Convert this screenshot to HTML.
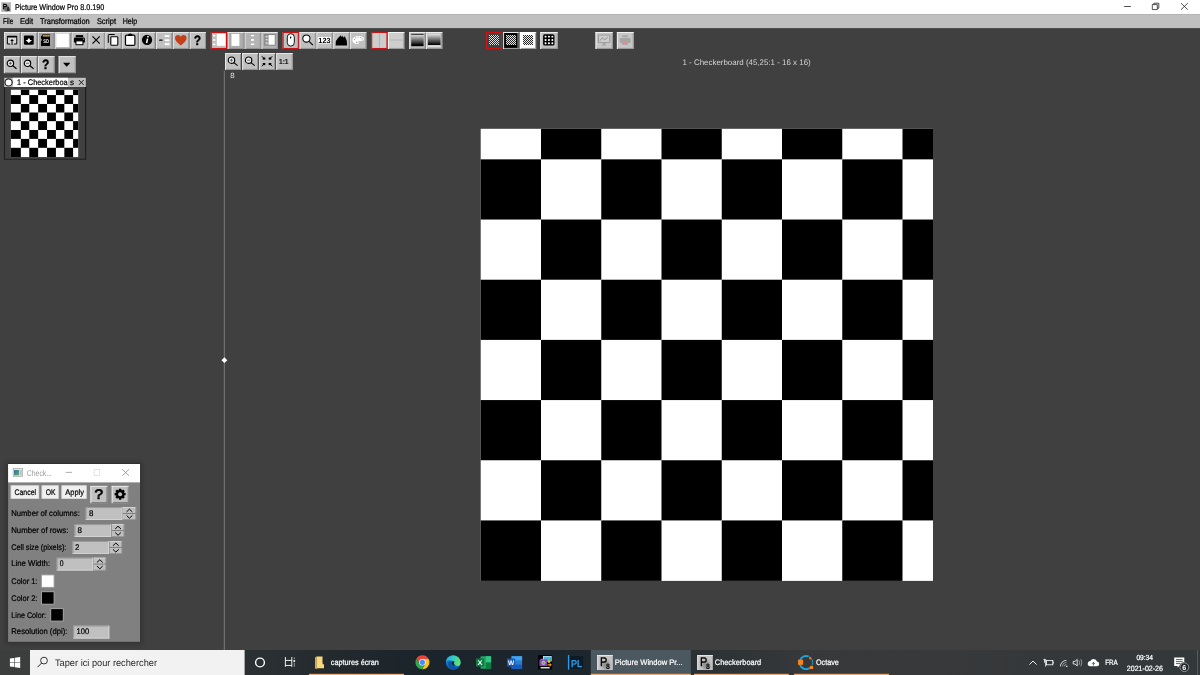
<!DOCTYPE html>
<html>
<head>
<meta charset="utf-8">
<title>Picture Window Pro 8.0.190</title>
<style>
html,body{margin:0;padding:0;}
body{width:1200px;height:675px;overflow:hidden;background:#404040;font-family:"Liberation Sans",sans-serif;position:relative;}
svg.abs{position:absolute;left:0;top:0;display:block;}
svg text{font-family:"Liberation Sans",sans-serif;white-space:pre;}
</style>
</head>
<body>
<svg class="abs" style="will-change:transform" width="1200" height="675" viewBox="0 0 1200 675" text-rendering="geometricPrecision" font-family="'Liberation Sans', sans-serif">
<defs>
<!--DEFS-->
<linearGradient id="gradA" x1="0" y1="0" x2="0" y2="1"><stop offset="0.08" stop-color="#dcdcdc"/><stop offset="0.92" stop-color="#000"/></linearGradient>
<linearGradient id="gradB" x1="0" y1="0" x2="0" y2="1"><stop offset="0" stop-color="#e4e4e4"/><stop offset="0.95" stop-color="#000"/></linearGradient>
<path id="chkP" shape-rendering="crispEdges" d="M0 0h1v1h-1zM0 2h1v1h-1zM0 4h1v1h-1zM0 6h1v1h-1zM0 8h1v1h-1zM1 1h1v1h-1zM1 3h1v1h-1zM1 5h1v1h-1zM1 7h1v1h-1zM1 9h1v1h-1zM2 0h1v1h-1zM2 2h1v1h-1zM2 4h1v1h-1zM2 6h1v1h-1zM2 8h1v1h-1zM3 1h1v1h-1zM3 3h1v1h-1zM3 5h1v1h-1zM3 7h1v1h-1zM3 9h1v1h-1zM4 0h1v1h-1zM4 2h1v1h-1zM4 4h1v1h-1zM4 6h1v1h-1zM4 8h1v1h-1zM5 1h1v1h-1zM5 3h1v1h-1zM5 5h1v1h-1zM5 7h1v1h-1zM5 9h1v1h-1zM6 0h1v1h-1zM6 2h1v1h-1zM6 4h1v1h-1zM6 6h1v1h-1zM6 8h1v1h-1zM7 1h1v1h-1zM7 3h1v1h-1zM7 5h1v1h-1zM7 7h1v1h-1zM7 9h1v1h-1zM8 0h1v1h-1zM8 2h1v1h-1zM8 4h1v1h-1zM8 6h1v1h-1zM8 8h1v1h-1zM9 1h1v1h-1zM9 3h1v1h-1zM9 5h1v1h-1zM9 7h1v1h-1zM9 9h1v1h-1z"/>
<filter id="blur3" x="-20%" y="-20%" width="140%" height="140%"><feGaussianBlur stdDeviation="2.2"/></filter>
<filter id="blur1" x="-30%" y="-30%" width="160%" height="160%"><feGaussianBlur stdDeviation="0.9"/></filter>
<filter id="blur1b" x="-30%" y="-30%" width="160%" height="160%"><feGaussianBlur stdDeviation="0.6"/></filter>
<linearGradient id="icoG" x1="0" y1="0" x2="1" y2="1"><stop offset="0" stop-color="#3a6ea8"/><stop offset="1" stop-color="#58b070"/></linearGradient>
<linearGradient id="tbG" x1="0" y1="0" x2="1200" y2="0" gradientUnits="userSpaceOnUse"><stop offset="0" stop-color="#3b3e3d"/><stop offset="0.025" stop-color="#3b3e3d"/><stop offset="0.0251" stop-color="#2b3033"/><stop offset="0.215" stop-color="#2b3033"/><stop offset="0.275" stop-color="#232a2e"/><stop offset="0.35" stop-color="#1a242a"/><stop offset="0.49" stop-color="#1c262c"/><stop offset="0.576" stop-color="#2a3033"/><stop offset="0.617" stop-color="#2f3437"/><stop offset="0.667" stop-color="#36383a"/><stop offset="0.75" stop-color="#38393b"/><stop offset="0.86" stop-color="#35383a"/><stop offset="1" stop-color="#33383b"/></linearGradient>
<linearGradient id="edgeB" x1="0" y1="0" x2="0" y2="1"><stop offset="0" stop-color="#1c8ee2"/><stop offset="1" stop-color="#0c5bb0"/></linearGradient>
<linearGradient id="edgeG" x1="0" y1="0" x2="1" y2="0.3"><stop offset="0" stop-color="#1aa6e4"/><stop offset="0.45" stop-color="#2cc6d0"/><stop offset="1" stop-color="#66e264"/></linearGradient>
<!--/DEFS-->
</defs>
<!-- ===== TITLE + MENU ===== -->
<g id="titlemenu">
<rect x="0" y="0" width="1200" height="14.1" fill="#ffffff"/>
<rect x="0" y="14.1" width="1200" height="14" fill="#c0c0c0"/>
<!-- app icon -->
<rect x="1.1" y="2" width="9.8" height="9.8" fill="#b2b2b2"/>
<path d="M4.6 6.4 L8 5 L10.4 10.6 L6 11.4 L3.6 9.6 Z" fill="#4a4a4a" opacity="0.7" filter="url(#blur1b)"/>
<rect x="1.1" y="2" width="9.8" height="0.7" fill="#d4d4d4"/>
<rect x="1.1" y="2" width="0.7" height="9.8" fill="#d4d4d4"/>
<text x="2.7" y="8.8" font-size="7.3" fill="#000" stroke="#000" stroke-width="0.45" textLength="4.4" lengthAdjust="spacingAndGlyphs">P</text>
<text x="6.9" y="10.7" font-size="5.4" font-weight="bold" fill="#000" textLength="2.5" lengthAdjust="spacingAndGlyphs">8</text>
<text x="14.9" y="9.8" font-size="8.3" fill="#000" stroke="#000" stroke-width="0.22" textLength="89.5" lengthAdjust="spacingAndGlyphs">Picture Window Pro 8.0.190</text>
<!-- window controls -->
<rect x="1124.2" y="6.2" width="6.6" height="0.8" fill="#222"/>
<path d="M1152.3 4.6 h5 v5 h-5 z M1153.8 4.6 v-1.4 h5 v5 h-1.5" fill="none" stroke="#222" stroke-width="0.8"/>
<path d="M1181 3.1 l6.8 6.6 M1187.8 3.1 l-6.8 6.6" fill="none" stroke="#222" stroke-width="0.8"/>
<!-- menu -->
<g font-size="8.3" fill="#000" stroke="#000" stroke-width="0.24">
<text x="3.1" y="23.7" textLength="10" lengthAdjust="spacingAndGlyphs">File</text>
<text x="20" y="23.7" textLength="13.1" lengthAdjust="spacingAndGlyphs">Edit</text>
<text x="40" y="23.7" textLength="49.75" lengthAdjust="spacingAndGlyphs">Transformation</text>
<text x="96.9" y="23.7" textLength="19.1" lengthAdjust="spacingAndGlyphs">Script</text>
<text x="122.75" y="23.7" textLength="14.5" lengthAdjust="spacingAndGlyphs">Help</text>
</g>
</g>
<!-- ===== TOOLBAR ===== -->
<g id="toolbar">
<!--TOOLBAR-->
<rect x="4.06" y="32.00" width="16.25" height="17.00" fill="#c0c0c0"/><rect x="4.06" y="47.90" width="16.25" height="1.1" fill="#969696"/><rect x="19.31" y="32.00" width="1" height="17.00" fill="#969696"/><rect x="4.06" y="32.00" width="16.25" height="1" fill="#e6e6e6"/><rect x="4.06" y="32.00" width="1" height="17.00" fill="#e6e6e6"/>
<g transform="translate(4.06 32.00)"><rect x="3.3" y="5" width="9.4" height="7" fill="#d6d6d6"/><path d="M3.3 5.2 V12 H6.2 M9.8 12 H12.7 V5.2" fill="none" stroke="#000" stroke-width="1"/><rect x="2.8" y="3.7" width="10.4" height="1.9" rx="0.8" fill="#000"/><path d="M8 12.9 V8.6" stroke="#000" stroke-width="1" fill="none"/><path d="M6.1 9 L8 6.9 L9.9 9 Z" fill="#000"/></g>
<rect x="20.93" y="32.00" width="16.25" height="17.00" fill="#c0c0c0"/><rect x="20.93" y="47.90" width="16.25" height="1.1" fill="#969696"/><rect x="36.19" y="32.00" width="1" height="17.00" fill="#969696"/><rect x="20.93" y="32.00" width="16.25" height="1" fill="#e6e6e6"/><rect x="20.93" y="32.00" width="1" height="17.00" fill="#e6e6e6"/>
<g transform="translate(20.93 32.00)"><rect x="3" y="3.4" width="9.8" height="9.4" rx="1.2" fill="#000"/><path d="M4.7 8 H6.7 L7.1 6.4 H8.7 L9.1 8 H11.1 L7.9 11 Z" fill="#fff"/></g>
<rect x="37.81" y="32.00" width="16.25" height="17.00" fill="#a2a2a2"/><rect x="37.81" y="47.90" width="16.25" height="1.1" fill="#969696"/><rect x="53.06" y="32.00" width="1" height="17.00" fill="#969696"/><rect x="37.81" y="32.00" width="16.25" height="1" fill="#e6e6e6"/><rect x="37.81" y="32.00" width="1" height="17.00" fill="#e6e6e6"/>
<g transform="translate(37.81 32.00)"><path d="M5 2.2 H12.2 V13.9 H3.2 V9 L4 8.2 V7 L3.2 6.4 V4.4 Z" fill="#000"/><rect x="5" y="2.8" width="6.9" height="1.8" fill="#c9a545"/><rect x="6.9" y="2.8" width="0.5" height="1.8" fill="#7a6220"/><rect x="9.3" y="2.8" width="0.5" height="1.8" fill="#7a6220"/><text x="5.5" y="10.9" font-size="5.3" font-weight="bold" fill="#f4f4f4" textLength="5.6" lengthAdjust="spacingAndGlyphs">SD</text></g>
<rect x="54.69" y="32.00" width="16.25" height="17.00" fill="#c0c0c0"/><rect x="54.69" y="47.90" width="16.25" height="1.1" fill="#969696"/><rect x="69.94" y="32.00" width="1" height="17.00" fill="#969696"/><rect x="54.69" y="32.00" width="16.25" height="1" fill="#e6e6e6"/><rect x="54.69" y="32.00" width="1" height="17.00" fill="#e6e6e6"/>
<g transform="translate(54.69 32.00)"><rect x="1.6" y="1.6" width="12.6" height="13.4" fill="#fff"/></g>
<rect x="71.56" y="32.00" width="16.25" height="17.00" fill="#c0c0c0"/><rect x="71.56" y="47.90" width="16.25" height="1.1" fill="#969696"/><rect x="86.81" y="32.00" width="1" height="17.00" fill="#969696"/><rect x="71.56" y="32.00" width="16.25" height="1" fill="#e6e6e6"/><rect x="71.56" y="32.00" width="1" height="17.00" fill="#e6e6e6"/>
<g transform="translate(71.56 32.00)"><rect x="4.2" y="3.1" width="7.4" height="2" fill="#000"/><rect x="2.4" y="5.6" width="11" height="5.2" rx="1.3" fill="#000"/><rect x="4.4" y="8.9" width="7" height="3.8" fill="#fff" stroke="#000" stroke-width="1"/><rect x="11.3" y="6.7" width="1" height="0.9" fill="#ddd"/></g>
<rect x="88.44" y="32.00" width="16.25" height="17.00" fill="#c0c0c0"/><rect x="88.44" y="47.90" width="16.25" height="1.1" fill="#969696"/><rect x="103.69" y="32.00" width="1" height="17.00" fill="#969696"/><rect x="88.44" y="32.00" width="16.25" height="1" fill="#e6e6e6"/><rect x="88.44" y="32.00" width="1" height="17.00" fill="#e6e6e6"/>
<g transform="translate(88.44 32.00)"><path d="M4.1 4.3 L11.3 11.7 M11.3 4.3 L4.1 11.7" stroke="#000" stroke-width="1.15" fill="none"/></g>
<rect x="105.31" y="32.00" width="16.25" height="17.00" fill="#c0c0c0"/><rect x="105.31" y="47.90" width="16.25" height="1.1" fill="#969696"/><rect x="120.56" y="32.00" width="1" height="17.00" fill="#969696"/><rect x="105.31" y="32.00" width="16.25" height="1" fill="#e6e6e6"/><rect x="105.31" y="32.00" width="1" height="17.00" fill="#e6e6e6"/>
<g transform="translate(105.31 32.00)"><path d="M3 10.8 V3.3 Q3 2.5 3.8 2.5 H9.4" fill="none" stroke="#000" stroke-width="1"/><rect x="5.5" y="4.7" width="7" height="8.6" rx="0.9" fill="#fff" stroke="#000" stroke-width="1.1"/></g>
<rect x="122.19" y="32.00" width="16.25" height="17.00" fill="#c0c0c0"/><rect x="122.19" y="47.90" width="16.25" height="1.1" fill="#969696"/><rect x="137.44" y="32.00" width="1" height="17.00" fill="#969696"/><rect x="122.19" y="32.00" width="16.25" height="1" fill="#e6e6e6"/><rect x="122.19" y="32.00" width="1" height="17.00" fill="#e6e6e6"/>
<g transform="translate(122.19 32.00)"><rect x="3.3" y="3.2" width="9.4" height="10.2" rx="1.2" fill="#fff" stroke="#000" stroke-width="1.2"/><path d="M5.6 3.6 Q5.6 1.4 8 1.4 Q10.4 1.4 10.4 3.6 V4.1 H5.6 Z" fill="#000"/></g>
<rect x="139.06" y="32.00" width="16.25" height="17.00" fill="#c0c0c0"/><rect x="139.06" y="47.90" width="16.25" height="1.1" fill="#969696"/><rect x="154.31" y="32.00" width="1" height="17.00" fill="#969696"/><rect x="139.06" y="32.00" width="16.25" height="1" fill="#e6e6e6"/><rect x="139.06" y="32.00" width="1" height="17.00" fill="#e6e6e6"/>
<g transform="translate(139.06 32.00)"><circle cx="8" cy="7.9" r="5.15" fill="#000"/><circle cx="8.9" cy="4.7" r="0.85" fill="#fff"/><path d="M8.5 6.7 L7.5 11.2" stroke="#fff" stroke-width="1.5" fill="none"/></g>
<rect x="155.94" y="32.00" width="16.25" height="17.00" fill="#c0c0c0"/><rect x="155.94" y="47.90" width="16.25" height="1.1" fill="#969696"/><rect x="171.19" y="32.00" width="1" height="17.00" fill="#969696"/><rect x="155.94" y="32.00" width="16.25" height="1" fill="#e6e6e6"/><rect x="155.94" y="32.00" width="1" height="17.00" fill="#e6e6e6"/>
<g transform="translate(155.94 32.00)"><rect x="3.2" y="7.5" width="3.5" height="1.3" rx="0.6" fill="#000"/><rect x="8.8" y="3.1" width="4.6" height="1.9" fill="#fff"/><rect x="8.8" y="7.3" width="4.6" height="1.9" fill="#fff"/><rect x="8.8" y="11.2" width="4.6" height="1.9" fill="#fff"/></g>
<rect x="172.81" y="32.00" width="16.25" height="17.00" fill="#c0c0c0"/><rect x="172.81" y="47.90" width="16.25" height="1.1" fill="#969696"/><rect x="188.06" y="32.00" width="1" height="17.00" fill="#969696"/><rect x="172.81" y="32.00" width="16.25" height="1" fill="#e6e6e6"/><rect x="172.81" y="32.00" width="1" height="17.00" fill="#e6e6e6"/>
<g transform="translate(172.81 32.00)"><path d="M8 13.6 C6.5 12 2.2 9 2.2 6.2 C2.2 4.2 3.7 3.1 5.2 3.1 C6.5 3.1 7.5 3.9 8 4.9 C8.5 3.9 9.5 3.1 10.8 3.1 C12.3 3.1 13.8 4.2 13.8 6.2 C13.8 9 9.5 12 8 13.6 Z" fill="#c5401a"/></g>
<rect x="189.69" y="32.00" width="16.25" height="17.00" fill="#c0c0c0"/><rect x="189.69" y="47.90" width="16.25" height="1.1" fill="#969696"/><rect x="204.94" y="32.00" width="1" height="17.00" fill="#969696"/><rect x="189.69" y="32.00" width="16.25" height="1" fill="#e6e6e6"/><rect x="189.69" y="32.00" width="1" height="17.00" fill="#e6e6e6"/>
<g transform="translate(189.69 32.00)"><text x="4.1" y="12.9" font-size="13.6" font-weight="bold" fill="#000" stroke="#000" stroke-width="0.35" textLength="7.4" lengthAdjust="spacingAndGlyphs">?</text></g>
<rect x="210.80" y="32.00" width="16.25" height="17.00" fill="#c0c0c0"/><rect x="211.30" y="32.50" width="15.25" height="16.00" fill="none" stroke="#c81414" stroke-width="1.1"/>
<g transform="translate(210.80 32.00)"><rect x="6" y="1.8" width="8.6" height="12" fill="#fff"/><rect x="2.2" y="2.9" width="2.3" height="1.5" fill="#fff"/><rect x="2.2" y="7.2" width="2.3" height="1.6" fill="#fff"/><rect x="2.2" y="11.6" width="2.3" height="1.5" fill="#fff"/></g>
<rect x="227.68" y="32.00" width="16.25" height="17.00" fill="#adadad"/><rect x="227.68" y="47.90" width="16.25" height="1.1" fill="#969696"/><rect x="242.93" y="32.00" width="1" height="17.00" fill="#969696"/><rect x="227.68" y="32.00" width="16.25" height="1" fill="#e6e6e6"/><rect x="227.68" y="32.00" width="1" height="17.00" fill="#e6e6e6"/>
<g transform="translate(227.68 32.00)"><rect x="3.8" y="1.9" width="7.9" height="12" fill="#fff"/></g>
<rect x="244.55" y="32.00" width="16.25" height="17.00" fill="#b4b4b4"/><rect x="244.55" y="47.90" width="16.25" height="1.1" fill="#969696"/><rect x="259.80" y="32.00" width="1" height="17.00" fill="#969696"/><rect x="244.55" y="32.00" width="16.25" height="1" fill="#e6e6e6"/><rect x="244.55" y="32.00" width="1" height="17.00" fill="#e6e6e6"/>
<g transform="translate(244.55 32.00)"><rect x="6.2" y="2.9" width="3.6" height="1.4" rx="0.7" fill="#fff"/><ellipse cx="8" cy="7.9" rx="1.4" ry="1.2" fill="#fff"/><rect x="6.2" y="11.6" width="3.6" height="1.4" rx="0.7" fill="#fff"/></g>
<rect x="261.43" y="32.00" width="16.25" height="17.00" fill="#b4b4b4"/><rect x="261.43" y="47.90" width="16.25" height="1.1" fill="#969696"/><rect x="276.68" y="32.00" width="1" height="17.00" fill="#969696"/><rect x="261.43" y="32.00" width="16.25" height="1" fill="#e6e6e6"/><rect x="261.43" y="32.00" width="1" height="17.00" fill="#e6e6e6"/>
<g transform="translate(261.43 32.00)"><rect x="2.9" y="2.6" width="10.9" height="10.6" fill="#fff" stroke="#7a7a7a" stroke-width="0.9"/><rect x="3.3" y="3" width="3.8" height="9.8" fill="#8e8e8e"/><rect x="4.2" y="3.9" width="2" height="1.5" fill="#ddd"/><rect x="4.2" y="7" width="2" height="1.5" fill="#ddd"/><rect x="4.2" y="10.2" width="2" height="1.5" fill="#ddd"/></g>
<rect x="282.60" y="32.00" width="16.25" height="17.00" fill="#c0c0c0"/><rect x="283.10" y="32.50" width="15.25" height="16.00" fill="none" stroke="#c81414" stroke-width="1.1"/>
<g transform="translate(282.60 32.00)"><rect x="4.7" y="1.7" width="7" height="12.4" rx="3.5" fill="#fff" stroke="#000" stroke-width="0.9"/><ellipse cx="8" cy="5.6" rx="0.7" ry="1.1" fill="#000"/></g>
<rect x="299.48" y="32.00" width="16.25" height="17.00" fill="#c0c0c0"/><rect x="299.48" y="47.90" width="16.25" height="1.1" fill="#969696"/><rect x="314.73" y="32.00" width="1" height="17.00" fill="#969696"/><rect x="299.48" y="32.00" width="16.25" height="1" fill="#e6e6e6"/><rect x="299.48" y="32.00" width="1" height="17.00" fill="#e6e6e6"/>
<g transform="translate(299.48 32.00)"><circle cx="6.9" cy="6.5" r="3.6" fill="#fff" stroke="#000" stroke-width="1.05"/><path d="M9.6 9.4 L13.4 13.2" stroke="#000" stroke-width="1.2" fill="none"/></g>
<rect x="316.35" y="32.00" width="16.25" height="17.00" fill="#c0c0c0"/><rect x="316.35" y="47.90" width="16.25" height="1.1" fill="#969696"/><rect x="331.60" y="32.00" width="1" height="17.00" fill="#969696"/><rect x="316.35" y="32.00" width="16.25" height="1" fill="#e6e6e6"/><rect x="316.35" y="32.00" width="1" height="17.00" fill="#e6e6e6"/>
<g transform="translate(316.35 32.00)"><rect x="1.6" y="5" width="13" height="6.5" fill="#fff"/><text x="2" y="10.9" font-size="7.4" font-weight="bold" fill="#000" textLength="12.2" lengthAdjust="spacingAndGlyphs">123</text></g>
<rect x="333.23" y="32.00" width="16.25" height="17.00" fill="#c0c0c0"/><rect x="333.23" y="47.90" width="16.25" height="1.1" fill="#969696"/><rect x="348.48" y="32.00" width="1" height="17.00" fill="#969696"/><rect x="333.23" y="32.00" width="16.25" height="1" fill="#e6e6e6"/><rect x="333.23" y="32.00" width="1" height="17.00" fill="#e6e6e6"/>
<g transform="translate(333.23 32.00)"><path d="M2.4 13.6 L2.6 9.2 L4.4 6.4 L5.4 5.6 L6 4.6 L6.6 4.4 L7.2 3 L7.7 4.6 L8.1 4.9 L8.7 3.9 L9.2 3.8 L9.8 5 L10.6 5.5 L11.2 4.6 L11.8 4.6 L12.3 6 L12.9 6.9 L13.6 9.2 L13.8 13.6 Z" fill="#000"/></g>
<rect x="350.10" y="32.00" width="16.25" height="17.00" fill="#c0c0c0"/><rect x="350.10" y="47.90" width="16.25" height="1.1" fill="#969696"/><rect x="365.35" y="32.00" width="1" height="17.00" fill="#969696"/><rect x="350.10" y="32.00" width="16.25" height="1" fill="#e6e6e6"/><rect x="350.10" y="32.00" width="1" height="17.00" fill="#e6e6e6"/>
<g transform="translate(350.10 32.00)"><path d="M8.3 3.9 C4.8 3.9 2.3 5.6 2.3 8 C2.3 10.4 4.6 12 7.3 12 C8.6 12 8.9 11.2 8.4 10.4 C7.9 9.5 8.7 8.8 9.8 8.9 C12 9.2 13.9 8.6 13.9 7 C13.9 5.1 11.4 3.9 8.3 3.9 Z" fill="#fff"/><circle cx="4.4" cy="7.6" r="0.6" fill="#999"/><circle cx="5.6" cy="5.8" r="0.6" fill="#999"/><circle cx="8" cy="5.1" r="0.6" fill="#999"/><circle cx="10.6" cy="5.5" r="0.6" fill="#999"/><circle cx="12" cy="6.9" r="0.6" fill="#999"/><circle cx="6.6" cy="10.2" r="0.8" fill="#999"/></g>
<rect x="371.20" y="32.00" width="16.25" height="17.00" fill="#cdcdcd"/><rect x="371.70" y="32.50" width="15.25" height="16.00" fill="none" stroke="#c81414" stroke-width="1.1"/>
<g transform="translate(371.20 32.00)"><rect x="7.9" y="1.6" width="0.8" height="13.6" fill="#aaa"/></g>
<rect x="388.07" y="32.00" width="16.25" height="17.00" fill="#cdcdcd"/><rect x="388.07" y="47.90" width="16.25" height="1.1" fill="#9a9a9a"/><rect x="403.32" y="32.00" width="1" height="17.00" fill="#9a9a9a"/><rect x="388.07" y="32.00" width="16.25" height="1" fill="#f4f4f4"/><rect x="388.07" y="32.00" width="1" height="17.00" fill="#f4f4f4"/>
<g transform="translate(388.07 32.00)"><rect x="1.6" y="7.6" width="13.4" height="0.8" fill="#b0b0b0"/></g>
<rect x="409.20" y="32.00" width="16.25" height="17.00" fill="#c0c0c0"/><rect x="409.20" y="47.90" width="16.25" height="1.1" fill="#969696"/><rect x="424.45" y="32.00" width="1" height="17.00" fill="#969696"/><rect x="409.20" y="32.00" width="16.25" height="1" fill="#ececec"/><rect x="409.20" y="32.00" width="1" height="17.00" fill="#ececec"/>
<g transform="translate(409.20 32.00)"><rect x="2" y="1.8" width="12.4" height="12.4" fill="url(#gradA)"/><rect x="2" y="1.8" width="12.4" height="1" fill="#222"/></g>
<rect x="426.07" y="32.00" width="16.25" height="17.00" fill="#c0c0c0"/><rect x="426.07" y="47.90" width="16.25" height="1.1" fill="#969696"/><rect x="441.32" y="32.00" width="1" height="17.00" fill="#969696"/><rect x="426.07" y="32.00" width="16.25" height="1" fill="#ececec"/><rect x="426.07" y="32.00" width="1" height="17.00" fill="#ececec"/>
<g transform="translate(426.07 32.00)"><rect x="1.8" y="1.8" width="12.6" height="11.6" fill="url(#gradB)"/><rect x="1.8" y="13.2" width="12.6" height="1.4" fill="#eee"/></g>
<rect x="486.00" y="32.00" width="16.00" height="17.00" fill="#3f4646"/><rect x="486.50" y="32.50" width="15.00" height="16.00" fill="none" stroke="#c81414" stroke-width="1.1"/>
<g transform="translate(486.00 32.00)"><rect x="3" y="3" width="10" height="10" fill="#242424"/><use href="#chkP" x="3" y="3" fill="#e4e4e4"/></g>
<rect x="503.10" y="32.00" width="15.40" height="17.00" fill="#000"/><rect x="503.10" y="47.90" width="15.40" height="1.1" fill="#9a9a9a"/><rect x="517.50" y="32.00" width="1" height="17.00" fill="#9a9a9a"/><rect x="503.10" y="32.00" width="15.40" height="1" fill="#e8e8e8"/><rect x="503.10" y="32.00" width="1" height="17.00" fill="#e8e8e8"/>
<g transform="translate(503.10 32.00)"><rect x="2.9" y="3" width="10" height="10" fill="#242424"/><use href="#chkP" x="2.9" y="3" fill="#e4e4e4"/></g>
<rect x="519.80" y="32.00" width="16.30" height="17.00" fill="#fff"/><rect x="519.80" y="47.90" width="16.30" height="1.1" fill="#a0a0a0"/><rect x="535.10" y="32.00" width="1" height="17.00" fill="#a0a0a0"/><rect x="519.80" y="32.00" width="16.30" height="1" fill="#fff"/><rect x="519.80" y="32.00" width="1" height="17.00" fill="#fff"/>
<g transform="translate(519.80 32.00)"><rect x="3.2" y="3" width="10" height="10" fill="#f0f0f0"/><use href="#chkP" x="3.2" y="3" fill="#242424"/></g>
<rect x="540.30" y="32.00" width="17.40" height="17.00" fill="#c0c0c0"/><rect x="540.30" y="47.90" width="17.40" height="1.1" fill="#969696"/><rect x="556.70" y="32.00" width="1" height="17.00" fill="#969696"/><rect x="540.30" y="32.00" width="17.40" height="1" fill="#ececec"/><rect x="540.30" y="32.00" width="1" height="17.00" fill="#ececec"/>
<g transform="translate(540.30 32.00)"><rect x="2.8" y="2.3" width="11.4" height="11.2" rx="1.6" fill="#000"/><rect x="4.30" y="3.70" width="1.9" height="1.9" rx="0.7" fill="#fff"/><rect x="4.30" y="7.00" width="1.9" height="1.9" rx="0.7" fill="#fff"/><rect x="4.30" y="10.30" width="1.9" height="1.9" rx="0.7" fill="#fff"/><rect x="7.70" y="3.70" width="1.9" height="1.9" rx="0.7" fill="#fff"/><rect x="7.70" y="7.00" width="1.9" height="1.9" rx="0.7" fill="#fff"/><rect x="7.70" y="10.30" width="1.9" height="1.9" rx="0.7" fill="#fff"/><rect x="11.10" y="3.70" width="1.9" height="1.9" rx="0.7" fill="#fff"/><rect x="11.10" y="7.00" width="1.9" height="1.9" rx="0.7" fill="#fff"/><rect x="11.10" y="10.30" width="1.9" height="1.9" rx="0.7" fill="#fff"/></g>
<rect x="595.50" y="32.00" width="17.20" height="17.00" fill="#c6c6c6"/><rect x="595.50" y="47.90" width="17.20" height="1.1" fill="#9a9a9a"/><rect x="611.70" y="32.00" width="1" height="17.00" fill="#9a9a9a"/><rect x="595.50" y="32.00" width="17.20" height="1" fill="#f0f0f0"/><rect x="595.50" y="32.00" width="1" height="17.00" fill="#f0f0f0"/>
<g transform="translate(595.50 32.00)"><rect x="2.9" y="3" width="11.4" height="7.5" rx="0.8" fill="#cdcdcd" stroke="#9e9e9e" stroke-width="1.15"/><path d="M4.5 8.7 L6.9 5.7 L9.3 7.9 L12.3 5" stroke="#8e8e8e" stroke-width="0.95" fill="none"/><path d="M7.5 11 L6.4 13.5 H10.8 L9.7 11 Z" fill="#a6a6a6"/></g>
<rect x="616.90" y="32.00" width="16.80" height="17.00" fill="#c6c6c6"/><rect x="616.90" y="47.90" width="16.80" height="1.1" fill="#9a9a9a"/><rect x="632.70" y="32.00" width="1" height="17.00" fill="#9a9a9a"/><rect x="616.90" y="32.00" width="16.80" height="1" fill="#f0f0f0"/><rect x="616.90" y="32.00" width="1" height="17.00" fill="#f0f0f0"/>
<g transform="translate(616.90 32.00)"><rect x="5.3" y="3.4" width="5.8" height="1.7" fill="#a4a4a4"/><rect x="2.9" y="6" width="10.8" height="5" rx="1.3" fill="#a6a6a6"/><rect x="5.4" y="8.6" width="5.4" height="3.9" fill="#de8f8f" stroke="#a6a6a6" stroke-width="0.7"/></g>
<!--/TOOLBAR-->
</g>
<!-- ===== LEFT PANEL ===== -->
<g id="leftpanel">
<!--LEFTPANEL-->
<rect x="3.90" y="56.10" width="16.25" height="17.00" fill="#c0c0c0"/><rect x="3.90" y="72.00" width="16.25" height="1.1" fill="#969696"/><rect x="19.15" y="56.10" width="1" height="17.00" fill="#969696"/><rect x="3.90" y="56.10" width="16.25" height="1" fill="#e6e6e6"/><rect x="3.90" y="56.10" width="1" height="17.00" fill="#e6e6e6"/>
<g transform="translate(3.90 56.10)"><circle cx="6.5" cy="7.2" r="3.2" fill="#e8e8e8" stroke="#000" stroke-width="1.15"/><path d="M5 7.2 H8 M6.5 5.7 V8.7" stroke="#333" stroke-width="0.7"/><path d="M8.9 9.6 L12.6 12.6" stroke="#000" stroke-width="1.1" fill="none"/></g>
<rect x="21.00" y="56.10" width="16.25" height="17.00" fill="#c0c0c0"/><rect x="21.00" y="72.00" width="16.25" height="1.1" fill="#969696"/><rect x="36.25" y="56.10" width="1" height="17.00" fill="#969696"/><rect x="21.00" y="56.10" width="16.25" height="1" fill="#e6e6e6"/><rect x="21.00" y="56.10" width="1" height="17.00" fill="#e6e6e6"/>
<g transform="translate(21.00 56.10)"><circle cx="6.5" cy="7.2" r="3.2" fill="#e8e8e8" stroke="#000" stroke-width="1.15"/><path d="M5 7.2 H8" stroke="#333" stroke-width="0.7"/><path d="M8.9 9.6 L12.6 12.6" stroke="#000" stroke-width="1.1" fill="none"/></g>
<rect x="38.00" y="56.10" width="16.50" height="17.00" fill="#c0c0c0"/><rect x="38.00" y="72.00" width="16.50" height="1.1" fill="#969696"/><rect x="53.50" y="56.10" width="1" height="17.00" fill="#969696"/><rect x="38.00" y="56.10" width="16.50" height="1" fill="#e6e6e6"/><rect x="38.00" y="56.10" width="1" height="17.00" fill="#e6e6e6"/>
<g transform="translate(38.00 56.10)"><text x="4" y="12.9" font-size="13.6" font-weight="bold" fill="#000" stroke="#000" stroke-width="0.35" textLength="7.4" lengthAdjust="spacingAndGlyphs">?</text></g>
<rect x="58.70" y="56.10" width="17.00" height="17.00" fill="#c0c0c0"/><rect x="58.70" y="72.00" width="17.00" height="1.1" fill="#969696"/><rect x="74.70" y="56.10" width="1" height="17.00" fill="#969696"/><rect x="58.70" y="56.10" width="17.00" height="1" fill="#e6e6e6"/><rect x="58.70" y="56.10" width="1" height="17.00" fill="#e6e6e6"/>
<g transform="translate(58.70 56.10)"><path d="M4.3 6.7 H11.7 L8 10.6 Z" fill="#000"/></g>
<rect x="4.2" y="77.8" width="81.6" height="9.2" fill="#c0c0c0"/>
<rect x="12.9" y="77.8" width="55" height="9.2" fill="#fff"/>
<circle cx="8.6" cy="82.4" r="3.6" fill="#fff" stroke="#1c1c1c" stroke-width="1.15"/>
<text x="17.1" y="84.9" font-size="8.1" fill="#000" stroke="#000" stroke-width="0.2" textLength="50.6" lengthAdjust="spacingAndGlyphs">1 - Checkerboa</text>
<text x="69.9" y="84.9" font-size="8.1" fill="#000" stroke="#000" stroke-width="0.2" textLength="4" lengthAdjust="spacingAndGlyphs">s</text>
<path d="M78.9 80 L83.7 84.9 M83.7 80 L78.9 84.9" stroke="#111" stroke-width="0.95" fill="none"/>
<path d="M4.5 87 V159.3 H85.6 V87" fill="none" stroke="#1e1e1e" stroke-width="1.1"/>
<rect x="10.9" y="89.75" width="67.30" height="67.30" fill="#fff"/>
<rect x="20.85" y="89.75" width="8.42" height="5.32" fill="#000"/>
<rect x="38.15" y="89.75" width="8.89" height="5.32" fill="#000"/>
<rect x="55.92" y="89.75" width="8.42" height="5.32" fill="#000"/>
<rect x="73.10" y="89.75" width="5.10" height="5.32" fill="#000"/>
<rect x="10.90" y="95.07" width="9.95" height="8.89" fill="#000"/>
<rect x="29.27" y="95.07" width="8.88" height="8.89" fill="#000"/>
<rect x="47.04" y="95.07" width="8.88" height="8.89" fill="#000"/>
<rect x="64.34" y="95.07" width="8.76" height="8.89" fill="#000"/>
<rect x="20.85" y="103.96" width="8.42" height="8.54" fill="#000"/>
<rect x="38.15" y="103.96" width="8.89" height="8.54" fill="#000"/>
<rect x="55.92" y="103.96" width="8.42" height="8.54" fill="#000"/>
<rect x="73.10" y="103.96" width="5.10" height="8.54" fill="#000"/>
<rect x="10.90" y="112.50" width="9.95" height="8.64" fill="#000"/>
<rect x="29.27" y="112.50" width="8.88" height="8.64" fill="#000"/>
<rect x="47.04" y="112.50" width="8.88" height="8.64" fill="#000"/>
<rect x="64.34" y="112.50" width="8.76" height="8.64" fill="#000"/>
<rect x="20.85" y="121.14" width="8.42" height="8.88" fill="#000"/>
<rect x="38.15" y="121.14" width="8.89" height="8.88" fill="#000"/>
<rect x="55.92" y="121.14" width="8.42" height="8.88" fill="#000"/>
<rect x="73.10" y="121.14" width="5.10" height="8.88" fill="#000"/>
<rect x="10.90" y="130.02" width="9.95" height="8.88" fill="#000"/>
<rect x="29.27" y="130.02" width="8.88" height="8.88" fill="#000"/>
<rect x="47.04" y="130.02" width="8.88" height="8.88" fill="#000"/>
<rect x="64.34" y="130.02" width="8.76" height="8.88" fill="#000"/>
<rect x="20.85" y="138.90" width="8.42" height="8.90" fill="#000"/>
<rect x="38.15" y="138.90" width="8.89" height="8.90" fill="#000"/>
<rect x="55.92" y="138.90" width="8.42" height="8.90" fill="#000"/>
<rect x="73.10" y="138.90" width="5.10" height="8.90" fill="#000"/>
<rect x="10.90" y="147.80" width="9.95" height="9.25" fill="#000"/>
<rect x="29.27" y="147.80" width="8.88" height="9.25" fill="#000"/>
<rect x="47.04" y="147.80" width="8.88" height="9.25" fill="#000"/>
<rect x="64.34" y="147.80" width="8.76" height="9.25" fill="#000"/>
<!--/LEFTPANEL-->
</g>
<!-- ===== IMAGE PANE ===== -->
<g id="imagepane">
<!--IMAGEPANE-->
<rect x="223.75" y="70.6" width="1.2" height="580" fill="#727272"/>
<path d="M224.4 357.3 L227.3 360.2 L224.4 363.1 L221.5 360.2 Z" fill="#fff"/>
<rect x="225.00" y="53.00" width="16.00" height="17.00" fill="#c0c0c0"/><rect x="225.00" y="68.90" width="16.00" height="1.1" fill="#969696"/><rect x="240.00" y="53.00" width="1" height="17.00" fill="#969696"/><rect x="225.00" y="53.00" width="16.00" height="1" fill="#e6e6e6"/><rect x="225.00" y="53.00" width="1" height="17.00" fill="#e6e6e6"/>
<g transform="translate(225.00 53.00)"><circle cx="6.5" cy="7.2" r="3.2" fill="#e8e8e8" stroke="#000" stroke-width="1.15"/><path d="M5 7.2 H8 M6.5 5.7 V8.7" stroke="#333" stroke-width="0.7"/><path d="M8.9 9.6 L12.6 12.6" stroke="#000" stroke-width="1.1" fill="none"/></g>
<rect x="242.10" y="53.00" width="16.00" height="17.00" fill="#c0c0c0"/><rect x="242.10" y="68.90" width="16.00" height="1.1" fill="#969696"/><rect x="257.10" y="53.00" width="1" height="17.00" fill="#969696"/><rect x="242.10" y="53.00" width="16.00" height="1" fill="#e6e6e6"/><rect x="242.10" y="53.00" width="1" height="17.00" fill="#e6e6e6"/>
<g transform="translate(242.10 53.00)"><circle cx="6.5" cy="7.2" r="3.2" fill="#e8e8e8" stroke="#000" stroke-width="1.15"/><path d="M5 7.2 H8" stroke="#333" stroke-width="0.7"/><path d="M8.9 9.6 L12.6 12.6" stroke="#000" stroke-width="1.1" fill="none"/></g>
<rect x="259.10" y="53.00" width="16.00" height="17.00" fill="#c0c0c0"/><rect x="259.10" y="68.90" width="16.00" height="1.1" fill="#969696"/><rect x="274.10" y="53.00" width="1" height="17.00" fill="#969696"/><rect x="259.10" y="53.00" width="16.00" height="1" fill="#e6e6e6"/><rect x="259.10" y="53.00" width="1" height="17.00" fill="#e6e6e6"/>
<g transform="translate(259.10 53.00)"><g fill="#000"><rect x="3.7" y="4.5" width="2.5" height="2.1"/><rect x="9.6" y="4.5" width="2.6" height="2.1"/><rect x="3.7" y="10" width="2.5" height="2.1"/><rect x="9.6" y="10" width="2.6" height="2.1"/></g><path d="M2.7 3.2 L4.6 5.2 M13.2 3.2 L11.2 5.2 M2.7 13.3 L4.6 11.3 M13.2 13.3 L11.2 11.3" stroke="#000" stroke-width="0.9" fill="none"/></g>
<rect x="276.20" y="53.00" width="16.50" height="17.00" fill="#c0c0c0"/><rect x="276.20" y="68.90" width="16.50" height="1.1" fill="#969696"/><rect x="291.70" y="53.00" width="1" height="17.00" fill="#969696"/><rect x="276.20" y="53.00" width="16.50" height="1" fill="#e6e6e6"/><rect x="276.20" y="53.00" width="1" height="17.00" fill="#e6e6e6"/>
<g transform="translate(276.20 53.00)"><text x="2.9" y="10.65" font-size="7.3" font-weight="bold" fill="#1c1c1c" stroke="#1c1c1c" stroke-width="0.2" textLength="9.4" lengthAdjust="spacingAndGlyphs">1:1</text></g>
<text x="230.2" y="78" font-size="7.6" fill="#e0e0e0" textLength="4.4" lengthAdjust="spacingAndGlyphs">8</text>
<text x="682.5" y="64.5" font-size="8.1" fill="#d4d4d4" textLength="128.2" lengthAdjust="spacingAndGlyphs">1 - Checkerboard (45,25:1 - 16 x 16)</text>
<!--/IMAGEPANE-->
<g id="board">
<rect x="480.7" y="128.8" width="452.30" height="452.10" fill="#fff"/>
<rect x="541.00" y="128.80" width="60.25" height="30.55" fill="#000"/>
<rect x="661.50" y="128.80" width="60.25" height="30.55" fill="#000"/>
<rect x="782.00" y="128.80" width="60.25" height="30.55" fill="#000"/>
<rect x="902.50" y="128.80" width="30.50" height="30.55" fill="#000"/>
<rect x="480.70" y="159.35" width="60.30" height="60.18" fill="#000"/>
<rect x="601.25" y="159.35" width="60.25" height="60.18" fill="#000"/>
<rect x="721.75" y="159.35" width="60.25" height="60.18" fill="#000"/>
<rect x="842.25" y="159.35" width="60.25" height="60.18" fill="#000"/>
<rect x="541.00" y="219.53" width="60.25" height="60.18" fill="#000"/>
<rect x="661.50" y="219.53" width="60.25" height="60.18" fill="#000"/>
<rect x="782.00" y="219.53" width="60.25" height="60.18" fill="#000"/>
<rect x="902.50" y="219.53" width="30.50" height="60.18" fill="#000"/>
<rect x="480.70" y="279.71" width="60.30" height="60.18" fill="#000"/>
<rect x="601.25" y="279.71" width="60.25" height="60.18" fill="#000"/>
<rect x="721.75" y="279.71" width="60.25" height="60.18" fill="#000"/>
<rect x="842.25" y="279.71" width="60.25" height="60.18" fill="#000"/>
<rect x="541.00" y="339.89" width="60.25" height="60.18" fill="#000"/>
<rect x="661.50" y="339.89" width="60.25" height="60.18" fill="#000"/>
<rect x="782.00" y="339.89" width="60.25" height="60.18" fill="#000"/>
<rect x="902.50" y="339.89" width="30.50" height="60.18" fill="#000"/>
<rect x="480.70" y="400.07" width="60.30" height="60.18" fill="#000"/>
<rect x="601.25" y="400.07" width="60.25" height="60.18" fill="#000"/>
<rect x="721.75" y="400.07" width="60.25" height="60.18" fill="#000"/>
<rect x="842.25" y="400.07" width="60.25" height="60.18" fill="#000"/>
<rect x="541.00" y="460.25" width="60.25" height="60.18" fill="#000"/>
<rect x="661.50" y="460.25" width="60.25" height="60.18" fill="#000"/>
<rect x="782.00" y="460.25" width="60.25" height="60.18" fill="#000"/>
<rect x="902.50" y="460.25" width="30.50" height="60.18" fill="#000"/>
<rect x="480.70" y="520.43" width="60.30" height="60.47" fill="#000"/>
<rect x="601.25" y="520.43" width="60.25" height="60.47" fill="#000"/>
<rect x="721.75" y="520.43" width="60.25" height="60.47" fill="#000"/>
<rect x="842.25" y="520.43" width="60.25" height="60.47" fill="#000"/>
</g>
</g>
<!-- ===== DIALOG ===== -->
<g id="dialog">
<!--DIALOG-->
<rect x="5" y="462" width="138" height="183" rx="3" fill="#000" opacity="0.18" filter="url(#blur3)"/>
<rect x="8.1" y="464" width="131.9" height="177.8" fill="#808080"/>
<rect x="8.1" y="464" width="131.9" height="18.4" fill="#fff"/>
<rect x="8.1" y="463.3" width="131.9" height="0.7" fill="#2e2e2e"/>
<rect x="13.1" y="468.3" width="9.6" height="8" fill="#e8e8e8" stroke="#9a9a9a" stroke-width="0.6"/>
<rect x="14" y="470" width="5.2" height="5.4" fill="url(#icoG)"/>
<rect x="20" y="470" width="1.8" height="5.4" fill="#b8c4cc"/>
<text x="26.8" y="475.5" font-size="8.3" fill="#9c9c9c" textLength="25.2" lengthAdjust="spacingAndGlyphs">Check...</text>
<rect x="65.6" y="471.9" width="6.5" height="0.8" fill="#9a9a9a"/>
<rect x="94.1" y="469.6" width="5.6" height="5.9" fill="none" stroke="#dcdcdc" stroke-width="0.8"/>
<path d="M122.2 469.3 L129 475.8 M129 469.3 L122.2 475.8" stroke="#8a8a8a" stroke-width="0.8" fill="none"/>
<rect x="11" y="485.7" width="27.8" height="12.8" fill="#f0f0f0" stroke="#dadada" stroke-width="0.8"/><text x="14.5" y="494.8" font-size="8.2" fill="#000" stroke="#000" stroke-width="0.22" textLength="21.6" lengthAdjust="spacingAndGlyphs">Cancel</text>
<rect x="41.9" y="485.7" width="16.4" height="12.8" fill="#f0f0f0" stroke="#dadada" stroke-width="0.8"/><text x="45.8" y="494.8" font-size="8.2" fill="#000" stroke="#000" stroke-width="0.22" textLength="9.8" lengthAdjust="spacingAndGlyphs">OK</text>
<rect x="61.8" y="485.7" width="24.5" height="12.8" fill="#f0f0f0" stroke="#dadada" stroke-width="0.8"/><text x="65.3" y="494.8" font-size="8.2" fill="#000" stroke="#000" stroke-width="0.22" textLength="18.6" lengthAdjust="spacingAndGlyphs">Apply</text>
<rect x="90.40" y="485.90" width="17.00" height="17.30" fill="#c0c0c0"/><rect x="90.40" y="502.10" width="17.00" height="1.1" fill="#7c7c7c"/><rect x="106.40" y="485.90" width="1" height="17.30" fill="#7c7c7c"/><rect x="90.40" y="485.90" width="17.00" height="1" fill="#e6e6e6"/><rect x="90.40" y="485.90" width="1" height="17.30" fill="#e6e6e6"/>
<text x="94.6" y="499.1" font-size="13.8" fill="#000" stroke="#000" stroke-width="0.7" textLength="8.6" lengthAdjust="spacingAndGlyphs">?</text>
<rect x="111.70" y="485.90" width="17.00" height="17.30" fill="#c0c0c0"/><rect x="111.70" y="502.10" width="17.00" height="1.1" fill="#7c7c7c"/><rect x="127.70" y="485.90" width="1" height="17.30" fill="#7c7c7c"/><rect x="111.70" y="485.90" width="17.00" height="1" fill="#e6e6e6"/><rect x="111.70" y="485.90" width="1" height="17.30" fill="#e6e6e6"/>
<path d="M125.59 493.09 L125.59 495.31 L124.17 495.59 L123.96 496.09 L124.77 497.29 L123.19 498.87 L121.99 498.06 L121.49 498.27 L121.21 499.69 L118.99 499.69 L118.71 498.27 L118.21 498.06 L117.01 498.87 L115.43 497.29 L116.24 496.09 L116.03 495.59 L114.61 495.31 L114.61 493.09 L116.03 492.81 L116.24 492.31 L115.43 491.11 L117.01 489.53 L118.21 490.34 L118.71 490.13 L118.99 488.71 L121.21 488.71 L121.49 490.13 L121.99 490.34 L123.19 489.53 L124.77 491.11 L123.96 492.31 L124.17 492.81 Z" fill="#000"/><circle cx="120.1" cy="494.2" r="2" fill="#c0c0c0"/>
<text x="11.2" y="515.8" font-size="8.2" fill="#000" stroke="#000" stroke-width="0.22" textLength="68.6" lengthAdjust="spacingAndGlyphs">Number of columns:</text>
<rect x="85.7" y="507.09999999999997" width="36.7" height="12.8" fill="#c0c0c0"/><rect x="85.7" y="507.09999999999997" width="36.7" height="0.9" fill="#969696"/><rect x="85.7" y="507.09999999999997" width="0.9" height="12.8" fill="#969696"/><rect x="85.7" y="519.1" width="36.7" height="0.8" fill="#d8d8d8"/><rect x="121.60000000000001" y="507.09999999999997" width="0.8" height="12.8" fill="#d8d8d8"/><text x="88.9" y="515.8499999999999" font-size="8.2" fill="#000" stroke="#000" stroke-width="0.22" textLength="4.4" lengthAdjust="spacingAndGlyphs">8</text>
<rect x="122.8" y="507.09999999999997" width="13.3" height="12.8" fill="#c0c0c0"/><rect x="122.8" y="513.05" width="13.3" height="0.9" fill="#787878"/><rect x="122.8" y="507.09999999999997" width="13.3" height="0.7" fill="#dedede"/><rect x="122.8" y="519.20" width="13.3" height="0.7" fill="#8a8a8a"/><rect x="135.40" y="507.09999999999997" width="0.7" height="12.8" fill="#8a8a8a"/><path d="M126.55 511.90 L129.45 509.10 L132.35 511.90" stroke="#000" stroke-width="1" fill="none"/><path d="M126.55 515.40 L129.45 518.20 L132.35 515.40" stroke="#000" stroke-width="1" fill="none"/>
<text x="11.2" y="532.9" font-size="8.2" fill="#000" stroke="#000" stroke-width="0.22" textLength="57.2" lengthAdjust="spacingAndGlyphs">Number of rows:</text>
<rect x="74.6" y="524.1999999999999" width="36.5" height="12.8" fill="#c0c0c0"/><rect x="74.6" y="524.1999999999999" width="36.5" height="0.9" fill="#969696"/><rect x="74.6" y="524.1999999999999" width="0.9" height="12.8" fill="#969696"/><rect x="74.6" y="536.1999999999999" width="36.5" height="0.8" fill="#d8d8d8"/><rect x="110.3" y="524.1999999999999" width="0.8" height="12.8" fill="#d8d8d8"/><text x="77.5" y="532.9499999999999" font-size="8.2" fill="#000" stroke="#000" stroke-width="0.22" textLength="4.4" lengthAdjust="spacingAndGlyphs">8</text>
<rect x="111.9" y="524.1999999999999" width="12.3" height="12.8" fill="#c0c0c0"/><rect x="111.9" y="530.15" width="12.3" height="0.9" fill="#787878"/><rect x="111.9" y="524.1999999999999" width="12.3" height="0.7" fill="#dedede"/><rect x="111.9" y="536.30" width="12.3" height="0.7" fill="#8a8a8a"/><rect x="123.50" y="524.1999999999999" width="0.7" height="12.8" fill="#8a8a8a"/><path d="M115.15 529.00 L118.05 526.20 L120.95 529.00" stroke="#000" stroke-width="1" fill="none"/><path d="M115.15 532.50 L118.05 535.30 L120.95 532.50" stroke="#000" stroke-width="1" fill="none"/>
<text x="11.2" y="549.7" font-size="8.2" fill="#000" stroke="#000" stroke-width="0.22" textLength="55.2" lengthAdjust="spacingAndGlyphs">Cell size (pixels):</text>
<rect x="72.6" y="541.0" width="36.4" height="12.8" fill="#c0c0c0"/><rect x="72.6" y="541.0" width="36.4" height="0.9" fill="#969696"/><rect x="72.6" y="541.0" width="0.9" height="12.8" fill="#969696"/><rect x="72.6" y="553.0" width="36.4" height="0.8" fill="#d8d8d8"/><rect x="108.2" y="541.0" width="0.8" height="12.8" fill="#d8d8d8"/><text x="74.9" y="549.75" font-size="8.2" fill="#000" stroke="#000" stroke-width="0.22" textLength="4.4" lengthAdjust="spacingAndGlyphs">2</text>
<rect x="109.6" y="541.0" width="12.5" height="12.8" fill="#c0c0c0"/><rect x="109.6" y="546.95" width="12.5" height="0.9" fill="#787878"/><rect x="109.6" y="541.0" width="12.5" height="0.7" fill="#dedede"/><rect x="109.6" y="553.10" width="12.5" height="0.7" fill="#8a8a8a"/><rect x="121.40" y="541.0" width="0.7" height="12.8" fill="#8a8a8a"/><path d="M112.95 545.80 L115.85 543.00 L118.75 545.80" stroke="#000" stroke-width="1" fill="none"/><path d="M112.95 549.30 L115.85 552.10 L118.75 549.30" stroke="#000" stroke-width="1" fill="none"/>
<text x="11.2" y="566.4" font-size="8.2" fill="#000" stroke="#000" stroke-width="0.22" textLength="38.9" lengthAdjust="spacingAndGlyphs">Line Width:</text>
<rect x="56.7" y="557.6999999999999" width="36.5" height="12.8" fill="#c0c0c0"/><rect x="56.7" y="557.6999999999999" width="36.5" height="0.9" fill="#969696"/><rect x="56.7" y="557.6999999999999" width="0.9" height="12.8" fill="#969696"/><rect x="56.7" y="569.6999999999999" width="36.5" height="0.8" fill="#d8d8d8"/><rect x="92.4" y="557.6999999999999" width="0.8" height="12.8" fill="#d8d8d8"/><text x="59.8" y="566.4499999999999" font-size="8.2" fill="#000" stroke="#000" stroke-width="0.22" textLength="3.8" lengthAdjust="spacingAndGlyphs">0</text>
<rect x="93.6" y="557.6999999999999" width="12.5" height="12.8" fill="#c0c0c0"/><rect x="93.6" y="563.65" width="12.5" height="0.9" fill="#787878"/><rect x="93.6" y="557.6999999999999" width="12.5" height="0.7" fill="#dedede"/><rect x="93.6" y="569.80" width="12.5" height="0.7" fill="#8a8a8a"/><rect x="105.40" y="557.6999999999999" width="0.7" height="12.8" fill="#8a8a8a"/><path d="M96.95 562.50 L99.85 559.70 L102.75 562.50" stroke="#000" stroke-width="1" fill="none"/><path d="M96.95 566.00 L99.85 568.80 L102.75 566.00" stroke="#000" stroke-width="1" fill="none"/>
<text x="11.3" y="584" font-size="8.2" fill="#000" stroke="#000" stroke-width="0.22" textLength="26.1" lengthAdjust="spacingAndGlyphs">Color 1:</text>
<rect x="41.1" y="574.5" width="13.4" height="13.3" fill="#a4a4a4"/><rect x="42.0" y="575.4" width="11.6" height="11.5" fill="#fff"/>
<text x="11.3" y="600.8" font-size="8.2" fill="#000" stroke="#000" stroke-width="0.22" textLength="26.1" lengthAdjust="spacingAndGlyphs">Color 2:</text>
<rect x="41.1" y="591.3" width="13.4" height="13.3" fill="#a4a4a4"/><rect x="42.0" y="592.1999999999999" width="11.6" height="11.5" fill="#000"/>
<text x="11.3" y="617.65" font-size="8.2" fill="#000" stroke="#000" stroke-width="0.22" textLength="34.8" lengthAdjust="spacingAndGlyphs">Line Color:</text>
<rect x="50.3" y="608.2" width="13.4" height="13.3" fill="#a4a4a4"/><rect x="51.199999999999996" y="609.1" width="11.6" height="11.5" fill="#000"/>
<text x="11.3" y="634.25" font-size="8.2" fill="#000" stroke="#000" stroke-width="0.22" textLength="56.1" lengthAdjust="spacingAndGlyphs">Resolution (dpi):</text>
<rect x="73.3" y="625.6" width="36" height="12.9" fill="#c0c0c0"/><rect x="73.3" y="625.6" width="36" height="0.9" fill="#969696"/><rect x="73.3" y="625.6" width="0.9" height="12.9" fill="#969696"/><rect x="73.3" y="637.7" width="36" height="0.8" fill="#d8d8d8"/><rect x="108.5" y="625.6" width="0.8" height="12.9" fill="#d8d8d8"/><text x="76.5" y="634.35" font-size="8.2" fill="#000" stroke="#000" stroke-width="0.22" textLength="12.6" lengthAdjust="spacingAndGlyphs">100</text>
<!--/DIALOG-->
</g>
<!-- ===== TASKBAR ===== -->
<g id="taskbar">
<!--TASKBAR-->
<rect x="0" y="650" width="1200" height="25" fill="url(#tbG)"/>
<path d="M9.9 658.6 L14.3 657.9 V662.2 H9.9 Z M14.9 657.8 L20.2 657 V662.2 H14.9 Z M9.9 662.8 H14.3 V667.1 L9.9 666.4 Z M14.9 662.8 H20.2 V668 L14.9 667.2 Z" fill="#fff"/>
<rect x="30" y="650" width="214.6" height="25" fill="#f2f2f2"/>
<circle cx="44" cy="660.6" r="3.4" fill="none" stroke="#222" stroke-width="0.9"/><path d="M41.7 663 L37.6 667.1" stroke="#222" stroke-width="1" fill="none"/>
<text x="55" y="666" font-size="9.6" fill="#2a2a2a" textLength="102" lengthAdjust="spacingAndGlyphs">Taper ici pour rechercher</text>
<circle cx="260" cy="662.5" r="4.4" fill="none" stroke="#fff" stroke-width="1.4"/>
<g fill="none" stroke="#fff" stroke-width="0.9"><path d="M285.4 657 V666.8 M291.8 657 V666.8 M285.4 660.45 H291.8 M285.4 665.45 H291.8"/><path d="M294.3 657.4 V659.4 M294.3 662.8 V666.8" stroke="#c8c8c8" stroke-width="0.7"/></g><rect x="293.4" y="660.2" width="1.7" height="1.7" fill="#fff"/>
<path d="M316.4 656.5 H322.5 V663.4 L324 664.8 V668.3 H317.3 L316.4 669.3 Z" fill="#f6d87e"/><path d="M315 657.5 L316.5 656.5 V669.3 L315 668.2 Z" fill="#dcb040"/><path d="M322.5 663.4 L324 664.8 H322.5 Z" fill="#e0b848"/>
<text x="330.8" y="665" font-size="8" fill="#fff" stroke="#fff" stroke-width="0.22" textLength="48" lengthAdjust="spacingAndGlyphs">captures écran</text>
<rect x="309" y="673.8" width="95" height="1.2" fill="#f4aa6c"/>
<g><path d="M416.52 658.51 A7 7 0 0 1 428.63 659.1 L422.4 659.1 L422.4 662.3 L419.63 663.9 Z" fill="#e8453c"/><path d="M428.63 659.1 A7 7 0 0 1 422.06 669.29 L425.17 663.9 L422.4 662.3 L422.4 659.1 Z" fill="#fcc31a"/><path d="M422.06 669.29 A7 7 0 0 1 416.52 658.51 L419.63 663.9 L422.4 662.3 L425.17 663.9 Z" fill="#2da94f"/><circle cx="422.4" cy="662.3" r="3.3" fill="#f4f4f4"/><circle cx="422.4" cy="662.3" r="2.6" fill="#4a8cf5"/></g>
<g><circle cx="453.2" cy="662.6" r="7.4" fill="url(#edgeB)"/><path d="M445.9 661.6 A7.4 7.4 0 0 1 460.6 662.9 C460.6 665.8 457.6 666.6 455.4 665.5 C453.6 664.6 453.5 663 454.5 661.8 C452.4 659.9 447.6 659.6 445.9 661.6 Z" fill="url(#edgeG)"/><path d="M454.5 661.8 C453.3 663.2 453.8 664.9 455.8 665.6 C453.4 666.2 451.1 664.7 451.5 662.6 C451.8 661.1 453.5 660.8 454.5 661.8 Z" fill="#0c2a4c"/><path d="M448.2 662.2 C447.6 666 450.4 669.2 454.2 669.4 C456.6 669.5 458.6 668.4 459.8 666.6 C457.4 668 453.6 667.6 451.8 665.2 C451 664.2 451 662.8 451.6 661.9 C450.4 661.4 448.8 661.4 448.2 662.2 Z" fill="#0e50a0" opacity="0.85"/></g>
<rect x="480.5" y="656.2" width="10.6" height="12.6" rx="0.8" fill="#21a366"/><rect x="485.8" y="656.2" width="5.3" height="6.3" fill="#33c481"/><rect x="485.8" y="662.5" width="5.3" height="6.3" fill="#107c41"/><rect x="476" y="658.6" width="8.2" height="8" rx="0.6" fill="#107c41"/><text x="477.6" y="665.4" font-size="6.6" fill="#fff" font-weight="bold" textLength="5" lengthAdjust="spacingAndGlyphs">X</text>
<rect x="511.5" y="656.2" width="10.6" height="12.6" rx="0.8" fill="#2b7cd3"/><rect x="511.5" y="656.2" width="10.6" height="4.2" fill="#41a5ee"/><rect x="511.5" y="664.6" width="10.6" height="4.2" fill="#185abd"/><rect x="507" y="658.6" width="8.2" height="8" rx="0.6" fill="#185abd"/><text x="508" y="665.4" font-size="6.6" fill="#fff" font-weight="bold" textLength="6.2" lengthAdjust="spacingAndGlyphs">W</text>
<rect x="538" y="655" width="14.2" height="14.5" fill="#050505"/><rect x="543" y="656" width="8.6" height="5.4" fill="#e8f0f4"/><rect x="543.6" y="656.6" width="7.4" height="4.2" fill="#46b4e4"/><path d="M543.6 660.8 L546.4 658.8 L548.4 660 L551 658.6 V660.8 Z" fill="#58b848"/><rect x="539.4" y="659.6" width="7.8" height="6.4" rx="1" fill="#8a44b8"/><rect x="540.6" y="658.8" width="2.4" height="1.2" fill="#a060d0"/><circle cx="543.5" cy="662.8" r="2" fill="#d8c8ec"/><circle cx="543.5" cy="662.8" r="1.3" fill="#58b040"/><circle cx="549" cy="661.6" r="1.3" fill="#f4c020"/><path d="M547.6 664.2 h2.2 v-1.3 l2 1.9 l-2 1.9 v-1.3 h-2.2 z" fill="#f0a020"/><rect x="540.6" y="667" width="9" height="1.5" fill="#d8d8d8"/>
<rect x="569.6" y="656" width="13.6" height="13" fill="#0e1a24"/><rect x="567.9" y="655" width="1.3" height="14.6" fill="#2a9df0"/><text x="571" y="666.6" font-size="9.8" fill="#2fa2f2" stroke="#2fa2f2" stroke-width="0.3" textLength="11.2" lengthAdjust="spacingAndGlyphs">PL</text>
<rect x="590.8" y="650" width="100" height="25" fill="#4c5860"/>
<rect x="597.2" y="655" width="15.6" height="15" fill="#c4c4c4"/><rect x="597.2" y="655" width="15.6" height="1" fill="#e4e4e4"/><rect x="597.2" y="655" width="1" height="15" fill="#e4e4e4"/><path d="M602.7 662.0 L608.2 660.0 L610.8000000000001 668.0 L605.2 669.6 L601.8000000000001 667.0 Z" fill="#6a6a6a" opacity="0.55" filter="url(#blur1)"/><text x="599.9000000000001" y="665.9" font-size="12.4" fill="#000" stroke="#000" stroke-width="0.35" textLength="7.3" lengthAdjust="spacingAndGlyphs">P</text><text x="605.9000000000001" y="668.7" font-size="7.8" font-weight="bold" fill="#000" textLength="3.9" lengthAdjust="spacingAndGlyphs">8</text>
<text x="614.8" y="665" font-size="8" fill="#fff" stroke="#fff" stroke-width="0.22" textLength="67.8" lengthAdjust="spacingAndGlyphs">Picture Window Pr...</text>
<rect x="590.8" y="673.8" width="100" height="1.2" fill="#f4aa6c"/>
<rect x="697.2" y="655" width="15.6" height="15" fill="#c4c4c4"/><rect x="697.2" y="655" width="15.6" height="1" fill="#e4e4e4"/><rect x="697.2" y="655" width="1" height="15" fill="#e4e4e4"/><path d="M702.7 662.0 L708.2 660.0 L710.8000000000001 668.0 L705.2 669.6 L701.8000000000001 667.0 Z" fill="#6a6a6a" opacity="0.55" filter="url(#blur1)"/><text x="699.9000000000001" y="665.9" font-size="12.4" fill="#000" stroke="#000" stroke-width="0.35" textLength="7.3" lengthAdjust="spacingAndGlyphs">P</text><text x="705.9000000000001" y="668.7" font-size="7.8" font-weight="bold" fill="#000" textLength="3.9" lengthAdjust="spacingAndGlyphs">8</text>
<text x="714.8" y="665" font-size="8" fill="#fff" stroke="#fff" stroke-width="0.22" textLength="46.4" lengthAdjust="spacingAndGlyphs">Checkerboard</text>
<rect x="694" y="673.8" width="94.8" height="1.2" fill="#f4aa6c"/>
<g><path d="M808.6 656.4 A6.6 6.6 0 1 0 811.4 666.6" fill="none" stroke="#1fa4dc" stroke-width="1.9"/><path d="M808.6 656.4 A6.6 6.6 0 0 1 812.2 665" fill="none" stroke="#1fa4dc" stroke-width="0.9"/><rect x="798" y="659.7" width="5.1" height="5.1" fill="#f58220"/><rect x="810" y="665.9" width="3.1" height="3.1" fill="#f58220"/><rect x="809.2" y="657.2" width="1.9" height="2" fill="#f58220"/></g>
<text x="816" y="665" font-size="8" fill="#fff" stroke="#fff" stroke-width="0.22" textLength="22.8" lengthAdjust="spacingAndGlyphs">Octave</text>
<rect x="794" y="673.8" width="95" height="1.2" fill="#f4aa6c"/>
<path d="M1029.4 664.6 L1033 661 L1036.6 664.6" stroke="#fff" stroke-width="0.9" fill="none"/>
<g fill="none" stroke="#fff" stroke-width="0.8"><rect x="1046.4" y="660.4" width="6.4" height="4.4"/><path d="M1043.4 659.4 H1045.6 V666.6 M1044.5 659.4 V662.8"/></g><rect x="1052.8" y="661.6" width="0.9" height="2" fill="#fff"/>
<g fill="none" stroke="#fff" stroke-width="0.8"><path d="M1060.4 666.4 A6 6 0 0 1 1066.4 660.4"/><path d="M1062.4 666.4 A4 4 0 0 1 1066.4 662.4" stroke="#aaa"/><path d="M1064.4 666.4 A2 2 0 0 1 1066.4 664.4" stroke="#aaa"/></g><rect x="1066.2" y="665.8" width="1.2" height="1.2" fill="#fff"/>
<path d="M1073.2 661.4 H1075 L1077.2 659.4 V666 L1075 664 H1073.2 Z" fill="none" stroke="#fff" stroke-width="0.8"/><path d="M1079 660.4 Q1080.4 662.6 1079 665 M1080.8 659.2 Q1083 662.6 1080.8 666.2" fill="none" stroke="#bbb" stroke-width="0.7"/>
<path d="M1090.2 666.2 A2.6 2.6 0 0 1 1090.4 661 A3.6 3.6 0 0 1 1097 661.4 A2.4 2.4 0 0 1 1096.6 666.2 Z" fill="#fff"/><path d="M1093.4 665.6 V662.6 M1092 663.8 L1093.4 662.4 L1094.8 663.8" stroke="#343638" stroke-width="0.8" fill="none"/>
<text x="1105.2" y="665.25" font-size="7.7" fill="#fff" stroke="#fff" stroke-width="0.22" textLength="12.6" lengthAdjust="spacingAndGlyphs">FRA</text>
<text x="1136.4" y="659.6" font-size="7.2" fill="#fff" stroke="#fff" stroke-width="0.22" textLength="16.6" lengthAdjust="spacingAndGlyphs">09:34</text>
<text x="1126.8" y="670.9" font-size="7.6" fill="#fff" stroke="#fff" stroke-width="0.22" textLength="36.2" lengthAdjust="spacingAndGlyphs">2021-02-26</text>
<path d="M1174.2 657.5 H1184.3 V665.9 H1179.4 L1177.6 667.6 V665.9 H1174.2 Z" fill="#fff"/><path d="M1176 659.6 H1182.6 M1176 661.6 H1182.6 M1176 663.6 H1180.4" stroke="#33383b" stroke-width="0.8"/>
<circle cx="1184.4" cy="667.2" r="5.2" fill="#2b3033"/><circle cx="1184.4" cy="667.2" r="4.4" fill="#24282a" stroke="#d8d8d8" stroke-width="0.6"/><text x="1182.2" y="669.7" font-size="7.2" fill="#fff" font-weight="bold" textLength="3.9" lengthAdjust="spacingAndGlyphs">6</text>
<rect x="1197" y="650" width="0.9" height="25" fill="#5c6062"/>
<!--/TASKBAR-->
</g>
</svg>
</body>
</html>
